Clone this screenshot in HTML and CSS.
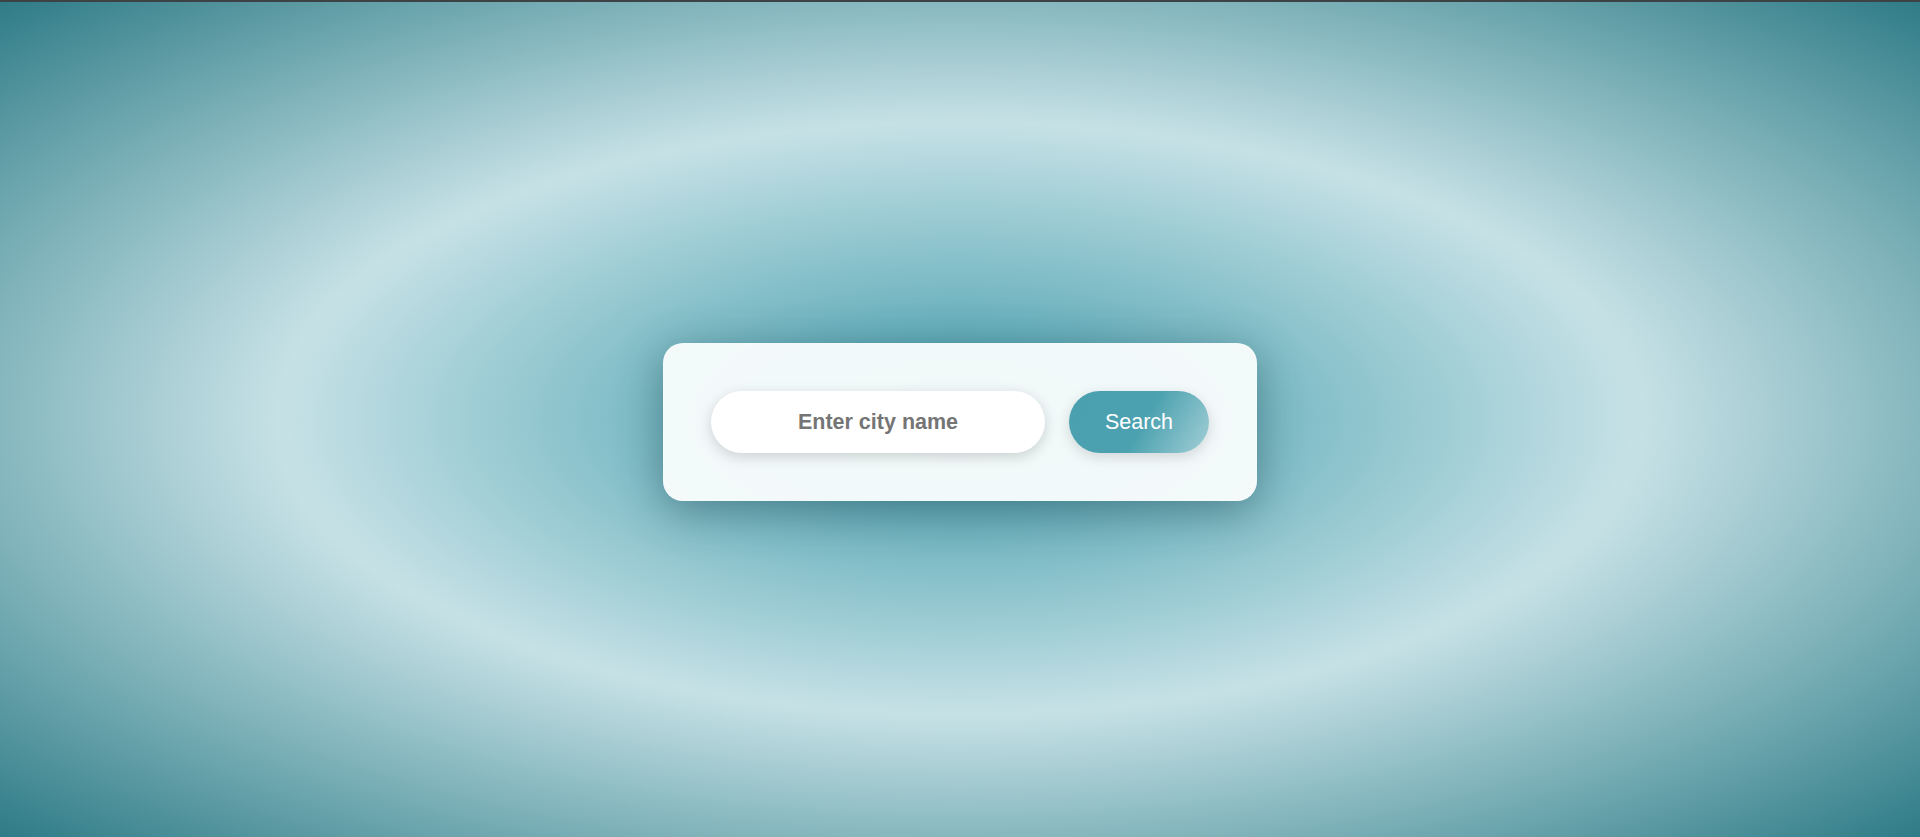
FILE: index.html
```html
<!DOCTYPE html>
<html lang="en">
<head>
<meta charset="utf-8">
<title>Weather</title>
<link rel="stylesheet" href="styles.css">
</head>
<body>
<div class="topbar"></div>
<main class="stage">
  <form class="search-card" onsubmit="return false;">
    <input class="city-input" type="text" placeholder="Enter city name">
    <button class="search-btn" type="submit">Search</button>
  </form>
</main>
</body>
</html>
```
FILE: styles.css
```css
html, body {
  margin: 0;
  padding: 0;
  height: 100%;
}
body {
  font-family: "Liberation Sans", Arial, sans-serif;
  display: flex;
  flex-direction: column;
  background: radial-gradient(ellipse at center, #3f9baa 0%, #c6e1e6 50%, #89b9c0 70%, #2e7b86 100%);
  overflow: hidden;
}
.topbar {
  height: 2px;
  background: #3d4244;
  flex: none;
}
.stage {
  flex: 1;
  display: flex;
  align-items: center;
  justify-content: center;
  padding-top: 5px;
}
.search-card {
  display: flex;
  align-items: center;
  gap: 24px;
  padding: 48px;
  background: rgba(250, 253, 253, 0.95);
  border-radius: 20px;
  box-shadow: 0 10px 45px rgba(20, 60, 70, 0.45);
}
.city-input {
  box-sizing: border-box;
  width: 334px;
  height: 62px;
  border: none;
  outline: none;
  border-radius: 31px;
  background: #fff;
  font-family: inherit;
  font-size: 21.5px;
  font-weight: bold;
  text-align: center;
  color: #333;
  box-shadow: 0 4px 14px rgba(0, 0, 0, 0.16);
}
.city-input::placeholder {
  color: #757575;
  opacity: 1;
}
.search-btn {
  box-sizing: border-box;
  width: 140px;
  height: 62px;
  border: none;
  border-radius: 31px;
  background: linear-gradient(120deg, #4aa0ae 0%, #4ba1af 52%, #a3cfd6 100%);
  color: #fff;
  font-family: inherit;
  font-size: 21.5px;
  cursor: pointer;
  box-shadow: 0 4px 14px rgba(0, 0, 0, 0.14);
}
```
